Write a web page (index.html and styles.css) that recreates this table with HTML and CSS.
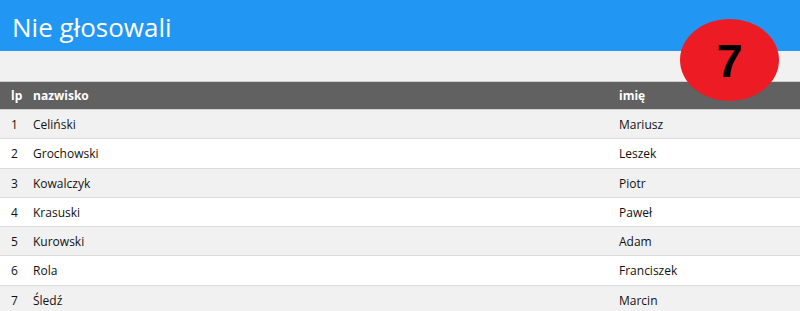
FILE: index.html
```html
<!DOCTYPE html>
<html lang="pl">
<head>
<meta charset="utf-8">
<title>Nie głosowali</title>
<link rel="stylesheet" href="styles.css">
</head>
<body>
<div class="page">
  <header class="bar">
    <h2 class="title">Nie głosowali</h2>
  </header>
  <div class="badge">7</div>
  <table class="list">
    <thead>
      <tr><th class="c-lp">lp</th><th class="c-name">nazwisko</th><th class="c-first">imię</th></tr>
    </thead>
    <tbody>
      <tr><td class="c-lp">1</td><td class="c-name">Celiński</td><td class="c-first">Mariusz</td></tr>
      <tr><td class="c-lp">2</td><td class="c-name">Grochowski</td><td class="c-first">Leszek</td></tr>
      <tr><td class="c-lp">3</td><td class="c-name">Kowalczyk</td><td class="c-first">Piotr</td></tr>
      <tr><td class="c-lp">4</td><td class="c-name">Krasuski</td><td class="c-first">Paweł</td></tr>
      <tr><td class="c-lp">5</td><td class="c-name">Kurowski</td><td class="c-first">Adam</td></tr>
      <tr><td class="c-lp">6</td><td class="c-name">Rola</td><td class="c-first">Franciszek</td></tr>
      <tr><td class="c-lp">7</td><td class="c-name">Śledź</td><td class="c-first">Marcin</td></tr>
    </tbody>
  </table>
</div>
</body>
</html>
```
FILE: styles.css
```css
html, body {
  margin: 0;
  padding: 0;
}
body {
  background: #f1f1f1;
  font-family: "Open Sans", "Noto Sans", sans-serif;
  color: #111;
}
.page {
  position: relative;
}
.bar {
  background: #2196f3;
  height: 51px;
  padding: 0 12px;
  display: flex;
  align-items: center;
}
.title {
  margin: 0;
  font-weight: 400;
  font-size: 26px;
  line-height: 1;
  color: #fff;
  padding-top: 2px;
}
.badge {
  position: absolute;
  left: 680px;
  top: 19px;
  width: 99px;
  height: 82px;
  border-radius: 50%;
  background: #ed1c24;
  color: #000;
  font-family: "Liberation Sans", Arial, sans-serif;
  font-weight: 700;
  font-size: 47px;
  display: flex;
  align-items: center;
  justify-content: center;
}
.list {
  margin-top: 30px;
  width: 100%;
  border-collapse: collapse;
  table-layout: fixed;
  font-size: 12px;
  border-top: 1px solid #cfcfcf;
}
.list th, .list td {
  text-align: left;
  white-space: nowrap;
}
.list th {
  background: #616161;
  color: #fff;
  font-weight: 700;
  padding: 6px 0 5px;
  line-height: 16px;
  border-bottom: 1px solid #cfcfcf;
}
.list td {
  border-bottom: 1px solid #dddddd;
  padding: 7px 0 5px;
  line-height: 16.3px;
}
.list tbody tr:nth-child(odd) td {
  background: #f1f1f1;
}
.list tbody tr:nth-child(even) td {
  background: #ffffff;
}
.c-lp {
  width: 22px;
  padding-left: 11px !important;
}
.c-name {
  width: 586px;
}
```
